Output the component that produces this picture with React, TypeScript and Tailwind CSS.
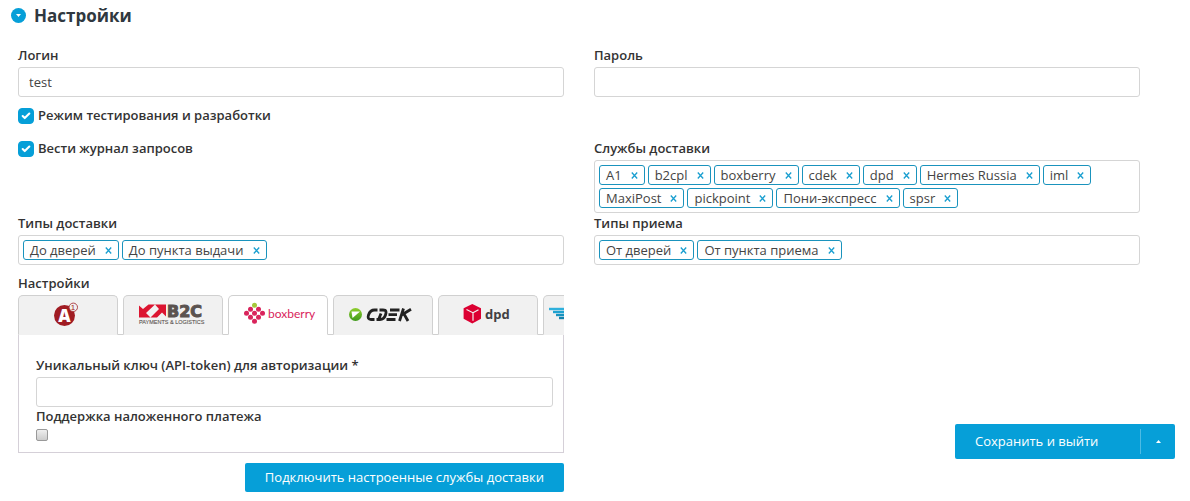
import React, { useState } from 'react';
import { Check } from 'lucide-react';

const labelClasses = 'block h-[21px] text-[13px] leading-[18px] font-semibold text-[#333]';
const inputClasses =
  'block h-[30px] w-full rounded-[3px] border border-[#d5d5d5] bg-white px-2.5 text-[13px] text-[#444] outline-none';

const A1Logo = () => (
  <svg width="98" height="38" viewBox="0 0 98 38" aria-label="A1">
    <circle cx="45.5" cy="19.5" r="10.5" fill="#a01c23" />
    <text
      x="45.5"
      y="25.5"
      textAnchor="middle"
      fontFamily="Open Sans, sans-serif"
      fontSize="17"
      fontWeight="800"
      fill="#fff"
    >
      A
    </text>
    <circle cx="54.3" cy="11.3" r="4.2" fill="#f1f1f1" stroke="#a83338" strokeWidth="0.9" />
    <text x="54" y="14" textAnchor="middle" fontFamily="Liberation Sans, sans-serif" fontSize="8" fill="#a01c23">
      1
    </text>
  </svg>
);

const B2cLogo = () => (
  <svg width="98" height="38" viewBox="0 0 98 38" aria-label="B2C">
    <g fill="#dc1430">
      <path d="M15 9.500l4 3.500 5.500-4.500H31L22 17l4.500 4.500H15z" />
      <path d="M42 8.500V20.500l-4-4-5 5h-6.500L35 13l-4-4.500z" />
    </g>
    <text
      x="43"
      y="20.5"
      fontFamily="DejaVu Sans, sans-serif"
      fontSize="16"
      fontWeight="700"
      fill="#5b5350"
      stroke="#5b5350"
      strokeWidth="1"
    >
      B2C
    </text>
    <text
      x="15"
      y="27.5"
      fontFamily="Liberation Sans, sans-serif"
      fontSize="5.5"
      fill="#5b5350"
      stroke="#5b5350"
      strokeWidth="0.1"
    >
      PAYMENTS &amp; LOGISTICS
    </text>
  </svg>
);

const BoxberryLogo = () => (
  <svg width="98" height="38" viewBox="0 0 98 38" aria-label="boxberry">
    {[0, 1, 2].map((row) =>
      [0, 1, 2].map((col) => (
        <circle
          key={`${row}-${col}`}
          cx={25.5 + (col - row) * 4}
          cy={9.3 + (col + row) * 4}
          r="2.5"
          fill={row + col === 0 ? '#a5c83c' : '#d9245c'}
        />
      )),
    )}
    <text x="39" y="21.5" fontFamily="Lato, sans-serif" fontSize="12" fill="#d9245c">
      boxberry
    </text>
  </svg>
);

const CdekLogo = () => (
  <svg width="98" height="38" viewBox="0 0 98 38" aria-label="CDEK">
    <defs>
      <linearGradient id="cdek" x1="0" y1="0" x2="0" y2="1">
        <stop offset="0" stopColor="#8fce2e" />
        <stop offset="1" stopColor="#3f9a1c" />
      </linearGradient>
    </defs>
    <circle cx="21.5" cy="18.5" r="6.5" fill="url(#cdek)" />
    <path d="M17.500 15.500h8.500l-4 3.500-3.500 3z" fill="#fff" />
    <g fill="none" stroke="#222" strokeWidth="2.8">
      <path d="M43.500 14h-3c-3.500 0-5 2-6 5s0 4.500 2.500 4.500h3.500" />
      <path d="M45.500 14h3.500c3.500 0 3.500 2 2.500 5s-2.500 4.500-5.500 4.500h-3.500M47 17.500l-2 5" />
      <path d="M56 14h9.500M54.500 18.700h8.500M52.500 23.500h9" />
      <path d="M69.500 12.500l-4 12.500M77 13.300l-9.500 5.700M70 18l4 7" />
    </g>
  </svg>
);

const DpdLogo = () => (
  <svg width="98" height="38" viewBox="0 0 98 38" aria-label="dpd">
    <path d="M33.300 8l8.700 4.300v10.400L33.300 27.500l-8.700-4.800V12.300z" fill="#dc0032" />
    <path d="M27.500 13.500l6.500 3.300v8M39.500 13.800l-5.500 3" fill="none" stroke="#f1f1f1" strokeWidth="1.2" />
    <text x="46" y="22.500" fontFamily="Open Sans, sans-serif" fontSize="13" fontWeight="700" fill="#414042">
      dpd
    </text>
  </svg>
);

const HermesLogo = () => (
  <svg width="98" height="38" viewBox="0 0 98 38" aria-label="Hermes">
    <g strokeWidth="2.4">
      <path d="M5 13h30" stroke="#2fb0dc" />
      <path d="M9 16h26" stroke="#1fa2d0" />
      <path d="M12 19h23" stroke="#1793c0" />
      <path d="M15 22h20" stroke="#1382ac" />
    </g>
  </svg>
);

const tabs = [
  { id: 'a1', logo: <A1Logo /> },
  { id: 'b2cpl', logo: <B2cLogo /> },
  { id: 'boxberry', logo: <BoxberryLogo /> },
  { id: 'cdek', logo: <CdekLogo /> },
  { id: 'dpd', logo: <DpdLogo /> },
  { id: 'hermes', logo: <HermesLogo /> },
];

const TagField = ({ label, initial }: { label: string; initial: string[] }) => {
  const [tags, setTags] = useState(initial);

  return (
    <div role="group" aria-label={label}>
      <span className={labelClasses}>{label}</span>
      <ul className="flex min-h-[30px] flex-wrap gap-[3px] rounded-[3px] border border-[#d5d5d5] p-1">
        {tags.map((tag) => (
          <li
            key={tag}
            className="flex h-5 items-center gap-[9px] rounded-[3px] border border-[#1a93bd] px-1.5 text-[13px] leading-[18px] text-[#444]"
          >
            {tag}
            <button
              type="button"
              aria-label={`Удалить ${tag}`}
              onClick={() => setTags(tags.filter((t) => t !== tag))}
              className="text-[#1a9fd0]"
            >
              <svg width="7" height="7" viewBox="0 0 7 7" fill="none" stroke="currentColor" strokeWidth="1.3">
                <path d="M.8 .5l5.400 6M6.200 .5l-5.400 6" />
              </svg>
            </button>
          </li>
        ))}
      </ul>
    </div>
  );
};

const BlueCheckbox = ({ label }: { label: string }) => (
  <label className="flex items-start gap-1 text-[13px] leading-[18px] font-semibold text-[#333]">
    <span className="mt-0.5 grid size-4">
      <input
        type="checkbox"
        defaultChecked
        className="peer col-start-1 row-start-1 size-4 appearance-none rounded-[4px] border border-[#069fd8] checked:bg-[#069fd8]"
      />
      <Check
        className="pointer-events-none invisible col-start-1 row-start-1 size-2.5 place-self-center text-white peer-checked:visible"
        strokeWidth={5}
      />
    </span>
    {label}
  </label>
);

const App = () => {
  const [active, setActive] = useState('boxberry');

  return (
    <main className="bg-white pr-[50px] pb-[9px] pl-[18px] font-['Open_Sans','Noto_Sans',sans-serif]">
      <header className="-ml-[7px] flex h-[46px] items-start gap-2 pt-1">
        <button
          type="button"
          aria-label="Свернуть"
          className="mt-1 flex size-[15px] items-center justify-center rounded-full bg-[#069fd8]"
        >
          <svg width="5" height="3" viewBox="0 0 5 3">
            <path d="M0 0h5L2.500 3z" fill="#fff" />
          </svg>
        </button>
        <h1 className="text-[17px] leading-6 font-bold text-[#2f3840]">Настройки</h1>
      </header>

      <div className="grid grid-cols-2 gap-x-[30px]">
        <div className="pb-px">
          <label htmlFor="login" className={labelClasses}>
            Логин
          </label>
          <input id="login" type="text" defaultValue="test" className={inputClasses} />
        </div>
        <div className="pb-px">
          <label htmlFor="password" className={labelClasses}>
            Пароль
          </label>
          <input id="password" type="password" className={inputClasses} />
        </div>

        <div className="col-span-2 flex h-[41px] items-start pt-2">
          <BlueCheckbox label="Режим тестирования и разработки" />
        </div>

        <div className="flex items-start">
          <BlueCheckbox label="Вести журнал запросов" />
        </div>
        <div className="pb-px">
          <TagField
            label="Службы доставки"
            initial={[
              'A1',
              'b2cpl',
              'boxberry',
              'cdek',
              'dpd',
              'Hermes Russia',
              'iml',
              'MaxiPost',
              'pickpoint',
              'Пони-экспресс',
              'spsr',
            ]}
          />
        </div>

        <TagField label="Типы доставки" initial={['До дверей', 'До пункта выдачи']} />
        <TagField label="Типы приема" initial={['От дверей', 'От пункта приема']} />

        <section className="min-w-0 pt-[9px]">
          <h2 className={labelClasses}>Настройки</h2>
          <div className="overflow-hidden">
            <div role="tablist" className="flex gap-[5px] border-b border-[#d0d0d0]">
              {tabs.map(({ id, logo }) => (
                <button
                  key={id}
                  type="button"
                  role="tab"
                  aria-selected={active === id}
                  onClick={() => setActive(id)}
                  className={`-mb-px flex h-10 w-[100px] shrink-0 items-start justify-center rounded-t-[5px] border border-[#d0d0d0] ${
                    active === id ? 'border-b-white bg-white' : 'border-b-[#f1f1f1] bg-[#f1f1f1]'
                  }`}
                >
                  {logo}
                </button>
              ))}
            </div>
          </div>
          <div role="tabpanel" className="border-x border-b border-[#d5d0d8] pt-[21px] pr-2.5 pb-[11px] pl-[17px]">
            <label htmlFor="token" className={labelClasses}>
              Уникальный ключ (API-token) для авторизации *
            </label>
            <input id="token" type="text" className={inputClasses} />
            <label htmlFor="cod" className={labelClasses}>
              Поддержка наложенного платежа
            </label>
            <input
              id="cod"
              type="checkbox"
              className="mt-px block size-3 appearance-none rounded-[2px] border border-[#999] bg-linear-to-b from-[#eee] to-[#ccc] checked:from-[#069fd8] checked:to-[#069fd8]"
            />
          </div>
          <div className="flex justify-end pt-2.5">
            <button
              type="button"
              className="h-[29px] rounded-[2px] bg-[#069fd8] px-5 text-[13px] font-medium text-white"
            >
              Подключить настроенные службы доставки
            </button>
          </div>
        </section>

        <div className="-mr-[35px] flex items-end justify-end pb-[33px]">
          <div className="flex h-[35px] items-center rounded-[2px] bg-[#069fd8] text-white">
            <button type="button" className="h-full w-[185px] px-5 text-left text-[13px] font-medium">
              Сохранить и выйти
            </button>
            <button
              type="button"
              aria-label="Другие действия"
              className="flex h-[25px] w-[35px] items-center justify-center border-l border-[#4dbbe4]"
            >
              <svg width="5" height="3" viewBox="0 0 5 3">
                <path d="M0 3h5L2.500 0z" fill="#fff" />
              </svg>
            </button>
          </div>
        </div>
      </div>
    </main>
  );
};

export default App;
